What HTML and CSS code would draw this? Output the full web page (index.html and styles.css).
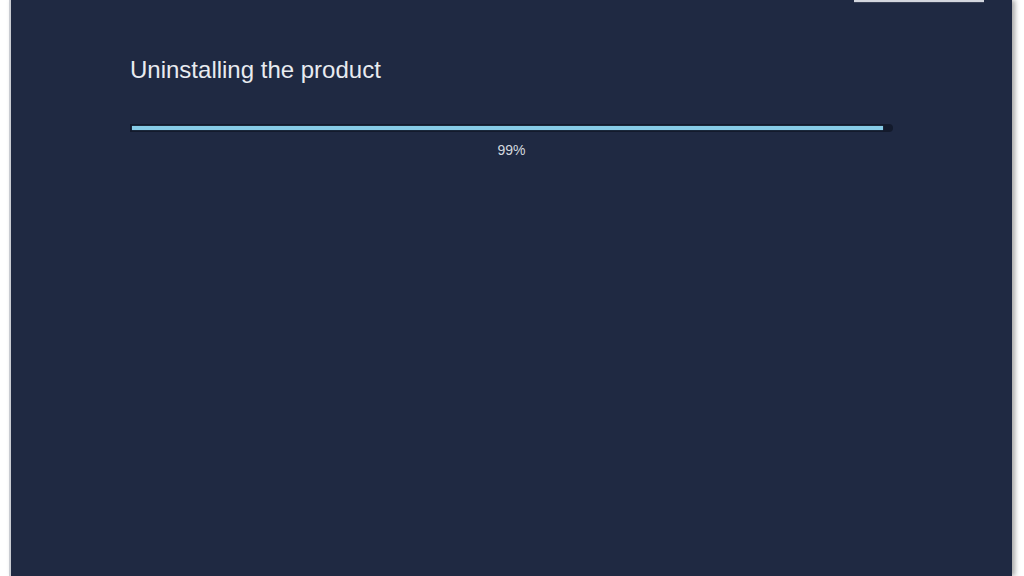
FILE: index.html
```html
<!DOCTYPE html>
<html lang="en">
<head>
<meta charset="UTF-8" />
<meta name="viewport" content="width=device-width, initial-scale=1" />
<title>Uninstalling the product</title>
<link rel="stylesheet" href="styles.css">
</head>
<body>

<div class="window">
  <div class="topbar">
    <button class="top-button"></button>
  </div>

  <div class="content">
    <h1 class="title">Uninstalling the product</h1>

    <div class="progress">
      <div class="track">
        <div class="fill" style="width: 751px"></div>
      </div>
      <div class="percent">99%</div>
    </div>
  </div>
</div>

</body>
</html>
```

FILE: styles.css
```css
html, body {
  margin: 0;
  padding: 0;
  height: 100%;
}
body {
  background: #fff;
  font-family: "Liberation Sans", Arial, sans-serif;
  overflow: hidden;
}
.window {
  margin-left: 9px;
  width: 1001px;
  height: 576px;
  background: #1f2942;
  border-left: 2px solid #c9ccd2;
  box-shadow: 3px 0 5px rgba(0, 0, 0, 0.35);
  display: flex;
  flex-direction: column;
}
.topbar {
  display: flex;
  justify-content: flex-end;
  height: 2px;
  padding-right: 28px;
}
.top-button {
  width: 130px;
  height: 2px;
  padding: 0;
  border: none;
  background: #d3d6de;
  box-shadow: 0 1px 0 #3a4258;
}
.content {
  padding-left: 119px;
}
.title {
  margin: 54px 0 0;
  font-size: 24px;
  font-weight: normal;
  line-height: 27px;
  color: #e8ebf0;
}
.progress {
  width: 763px;
  margin-top: 41px;
}
.track {
  height: 8px;
  background: #131a2c;
  border-radius: 0 4px 4px 0;
  padding: 2px 0 2px 2px;
  box-sizing: border-box;
}
.fill {
  height: 4px;
  background: #86cbe6;
  box-shadow: 0 0 1px #5aa8cc;
}
.percent {
  margin-top: 10px;
  text-align: center;
  font-size: 14px;
  color: #d4d8df;
}
```
